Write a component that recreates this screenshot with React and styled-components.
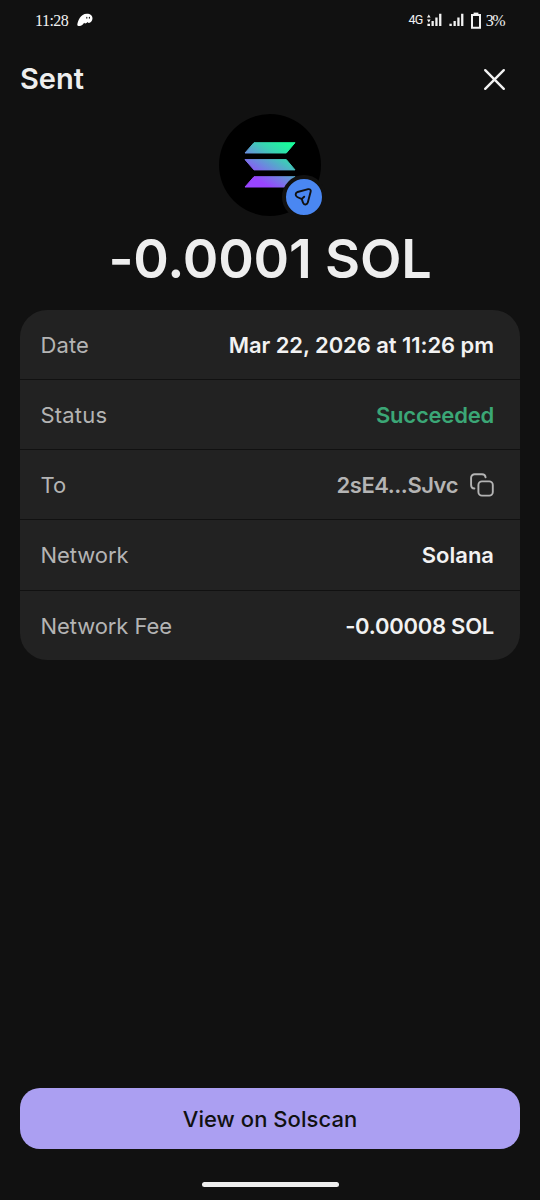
import React from 'react'
import styled, { createGlobalStyle } from 'styled-components'

const GlobalStyle = createGlobalStyle`
  body {
    margin: 0;
    background: #111111;
  }
`;

const Screen = styled.div`
  box-sizing: border-box;
  display: flex;
  flex-direction: column;
  width: 540px;
  height: 1200px;
  background: #111111;
  font-family: "Inter", "Liberation Sans", sans-serif;
  color: #eeeeee;
  overflow: hidden;
`;

const StatusBar = styled.div`
  box-sizing: border-box;
  display: flex;
  align-items: center;
  justify-content: space-between;
  height: 40px;
  padding: 0 36px 0 35px;
`;
const StatusGroup = styled.div`
  display: flex;
  align-items: center;
  gap: ${(props) => props.$gap}px;
`;
const StatusText = styled.span`
  font-family: "Liberation Serif", serif;
  font-size: 16px;
  line-height: 20px;
  letter-spacing: ${(props) => props.$spacing || 0}px;
  padding-top: 1px;
  color: #f2f2f2;
`;
const NetworkType = styled.span`
  font-family: Roboto, sans-serif;
  font-size: 12.5px;
  line-height: 20px;
  letter-spacing: -0.7px;
  color: #f2f2f2;
`;

const Header = styled.header`
  display: flex;
  align-items: center;
  justify-content: space-between;
  height: 74px;
  padding: 4px 32px 0 20px;
  box-sizing: border-box;
`;
const Title = styled.h1`
  margin: 0;
  font-weight: 600;
  font-size: 29px;
  line-height: 36px;
`;
const CloseButton = styled.button`
  display: flex;
  padding: 0;
  border: none;
  background: none;
  color: #f2f2f2;
`;

const Token = styled.div`
  position: relative;
  display: flex;
  align-items: center;
  justify-content: center;
  align-self: center;
  width: 102px;
  height: 102px;
  border-radius: 50%;
  background: #000000;
`;
const Badge = styled.div`
  position: absolute;
  right: -5px;
  bottom: -3px;
  display: flex;
  width: 36px;
  height: 36px;
  border: 4px solid #111111;
  border-radius: 50%;
  background: #4a87f2;
`;

const Amount = styled.div`
  margin-top: 10px;
  font-weight: 600;
  font-size: 54px;
  line-height: 66px;
  letter-spacing: -0.2px;
  text-align: center;
  white-space: nowrap;
`;

const Details = styled.div`
  display: grid;
  grid-template-rows: 69px 69px 69px 70px 69px;
  row-gap: 1px;
  margin: 18px 20px 0;
  border-radius: 27px;
  overflow: hidden;
`;
const Row = styled.div`
  display: flex;
  align-items: center;
  justify-content: space-between;
  padding: 0 26px 0 20.5px;
  background: #222222;
`;
const Label = styled.span`
  font-size: 22px;
  line-height: 28px;
  letter-spacing: ${(props) => props.$spacing || 0}px;
  color: #b4b4b4;
`;
const Value = styled.span`
  display: flex;
  align-items: center;
  gap: 12px;
  font-weight: 600;
  font-size: 22px;
  line-height: 28px;
  letter-spacing: ${(props) => props.$spacing || 0}px;
  color: ${(props) => props.$color || '#f2f2f2'};
`;

const Footer = styled.footer`
  display: flex;
  flex-direction: column;
  align-items: center;
  margin-top: auto;
  padding: 0 20px 13px;
`;
const ExplorerButton = styled.button`
  width: 100%;
  height: 61px;
  padding: 1px 0 0;
  border: none;
  border-radius: 20px;
  background: #ab9ff2;
  font-family: inherit;
  font-weight: 500;
  font-size: 22px;
  line-height: 28px;
  letter-spacing: 0.05px;
  color: #111111;
`;
const HomeBar = styled.div`
  width: 137px;
  height: 5px;
  margin-top: 33px;
  border-radius: 3px;
  background: #eeeeee;
`;

function GhostIcon() {
  return (
    <svg width="16" height="14" viewBox="0 0 16 14">
      <path
        fill="#ffffff"
        d="M0.3 11.4C1 8 3.4 0.7 9.8 0.7c3.6 0 5.7 2 5.7 4.6 0 2.6-1.8 4.6-3.6 4.6-0.8 0-1.2-0.4-1.3-0.8-0.6 0.9-1.5 1.4-2.3 1.4-0.6 0-1-0.3-1.2-0.7-0.9 1.6-2.6 3.3-4.6 3.3-1.4 0-2.4-0.6-2.2-1.7z"
      />
      <ellipse cx="9.8" cy="4.8" rx="0.6" ry="1" fill="#111111" />
      <ellipse cx="12.4" cy="4.8" rx="0.6" ry="1" fill="#111111" />
    </svg>
  )
}

function SignalIcon({ data }) {
  return (
    <svg width="15" height="14" viewBox="0 0 15 14" fill="#f2f2f2">
      {data ? (
        <path d="M0 4.6l1.8-3 1.8 3zM0 6.6h3.6L1.8 9.6zM0.4 10.7h2.6V13H0.4z" />
      ) : (
        <path d="M0.4 10.7h2.4V13H0.4z" />
      )}
      <path d="M4.5 8h2.3v5H4.5zM8.3 4.6h2.3V13H8.3zM12.1 0.8h2.3V13h-2.3z" />
    </svg>
  )
}

function BatteryIcon() {
  return (
    <svg width="10" height="17" viewBox="0 0 10 17">
      <path d="M1 3h8v12.8H1z" fill="none" stroke="#f2f2f2" strokeWidth="2" />
      <path d="M2.6 0.6h4.8v2H2.6z" fill="#f2f2f2" />
    </svg>
  )
}

function CloseIcon() {
  return (
    <svg width="27" height="27" viewBox="0 0 27 27">
      <path d="M4.2 4.2l18.6 18.6M22.8 4.2L4.2 22.8" stroke="currentColor" strokeWidth="2.4" strokeLinecap="round" />
    </svg>
  )
}

function SolanaIcon() {
  return (
    <svg width="52" height="46" viewBox="0 0 52 46">
      <defs>
        <linearGradient id="sol" gradientUnits="userSpaceOnUse" x1="43" y1="-4" x2="9" y2="50">
          <stop offset="0.08" stopColor="#19fb9b" />
          <stop offset="0.3" stopColor="#3bd0b4" />
          <stop offset="0.55" stopColor="#6a8bdd" />
          <stop offset="0.8" stopColor="#9945ff" />
        </linearGradient>
      </defs>
      <g fill="url(#sol)" stroke="url(#sol)" strokeWidth="1" strokeLinejoin="round">
        <path d="M10 0.7h41L42.3 11H1z" />
        <path d="M1 17.6h41.3L51 27.9H10z" />
        <path d="M10 34.7h41L42.3 45H1z" />
      </g>
    </svg>
  )
}

function SendIcon() {
  return (
    <svg width="36" height="36" viewBox="0 0 36 36">
      <path
        d="M11.6 13L22.2 10.2c1.7-0.4 2.9 0.7 2.5 2.4L21.8 23.6c-0.6 2.2-3.5 2.6-4.5 0.5-0.8-1.6-1.1-3-1.5-4.2-1.3-0.5-2.9-1-4.6-1.9-2.2-1.1-2-4.3 0.4-5zM15.8 19.9l2.4-2.2"
        fill="none"
        stroke="#111111"
        strokeWidth="1.9"
        strokeLinecap="round"
        strokeLinejoin="round"
      />
    </svg>
  )
}

function CopyIcon() {
  return (
    <svg width="24" height="24" viewBox="0 0 24 24" fill="none" stroke="#b4b4b4" strokeWidth="1.9" strokeLinecap="round">
      <rect x="8.4" y="8.4" width="14.4" height="14.2" rx="3.6" />
      <path d="M4.4 15.5A3.6 3.6 0 0 1 1.1 11.9V4.8A3.6 3.6 0 0 1 4.7 1.2H12A3.6 3.6 0 0 1 15.6 4.4" />
    </svg>
  )
}

export default function App() {
  return (
    <Screen>
      <GlobalStyle />
      <StatusBar>
        <StatusGroup $gap={9}>
          <StatusText $spacing={-0.5}>11:28</StatusText>
          <GhostIcon />
        </StatusGroup>
        <StatusGroup $gap={7}>
          <StatusGroup $gap={4}>
            <NetworkType>4G</NetworkType>
            <SignalIcon data />
          </StatusGroup>
          <SignalIcon />
          <StatusGroup $gap={5}>
            <BatteryIcon />
            <StatusText $spacing={-1.5}>3%</StatusText>
          </StatusGroup>
        </StatusGroup>
      </StatusBar>
      <Header>
        <Title>Sent</Title>
        <CloseButton aria-label="Close">
          <CloseIcon />
        </CloseButton>
      </Header>
      <Token>
        <SolanaIcon />
        <Badge>
          <SendIcon />
        </Badge>
      </Token>
      <Amount>-0.0001 SOL</Amount>
      <Details>
        <Row>
          <Label $spacing={0.1}>Date</Label>
          <Value $spacing={-0.06}>Mar 22, 2026 at 11:26 pm</Value>
        </Row>
        <Row>
          <Label $spacing={0.2}>Status</Label>
          <Value $spacing={-0.2} $color="#3ba776">Succeeded</Value>
        </Row>
        <Row>
          <Label>To</Label>
          <Value $spacing={-0.45} $color="#b4b4b4">
            2sE4...SJvc
            <CopyIcon />
          </Value>
        </Row>
        <Row>
          <Label $spacing={-0.05}>Network</Label>
          <Value>Solana</Value>
        </Row>
        <Row>
          <Label $spacing={-0.08}>Network Fee</Label>
          <Value $spacing={-0.25}>-0.00008 SOL</Value>
        </Row>
      </Details>
      <Footer>
        <ExplorerButton>View on Solscan</ExplorerButton>
        <HomeBar />
      </Footer>
    </Screen>
  )
}
